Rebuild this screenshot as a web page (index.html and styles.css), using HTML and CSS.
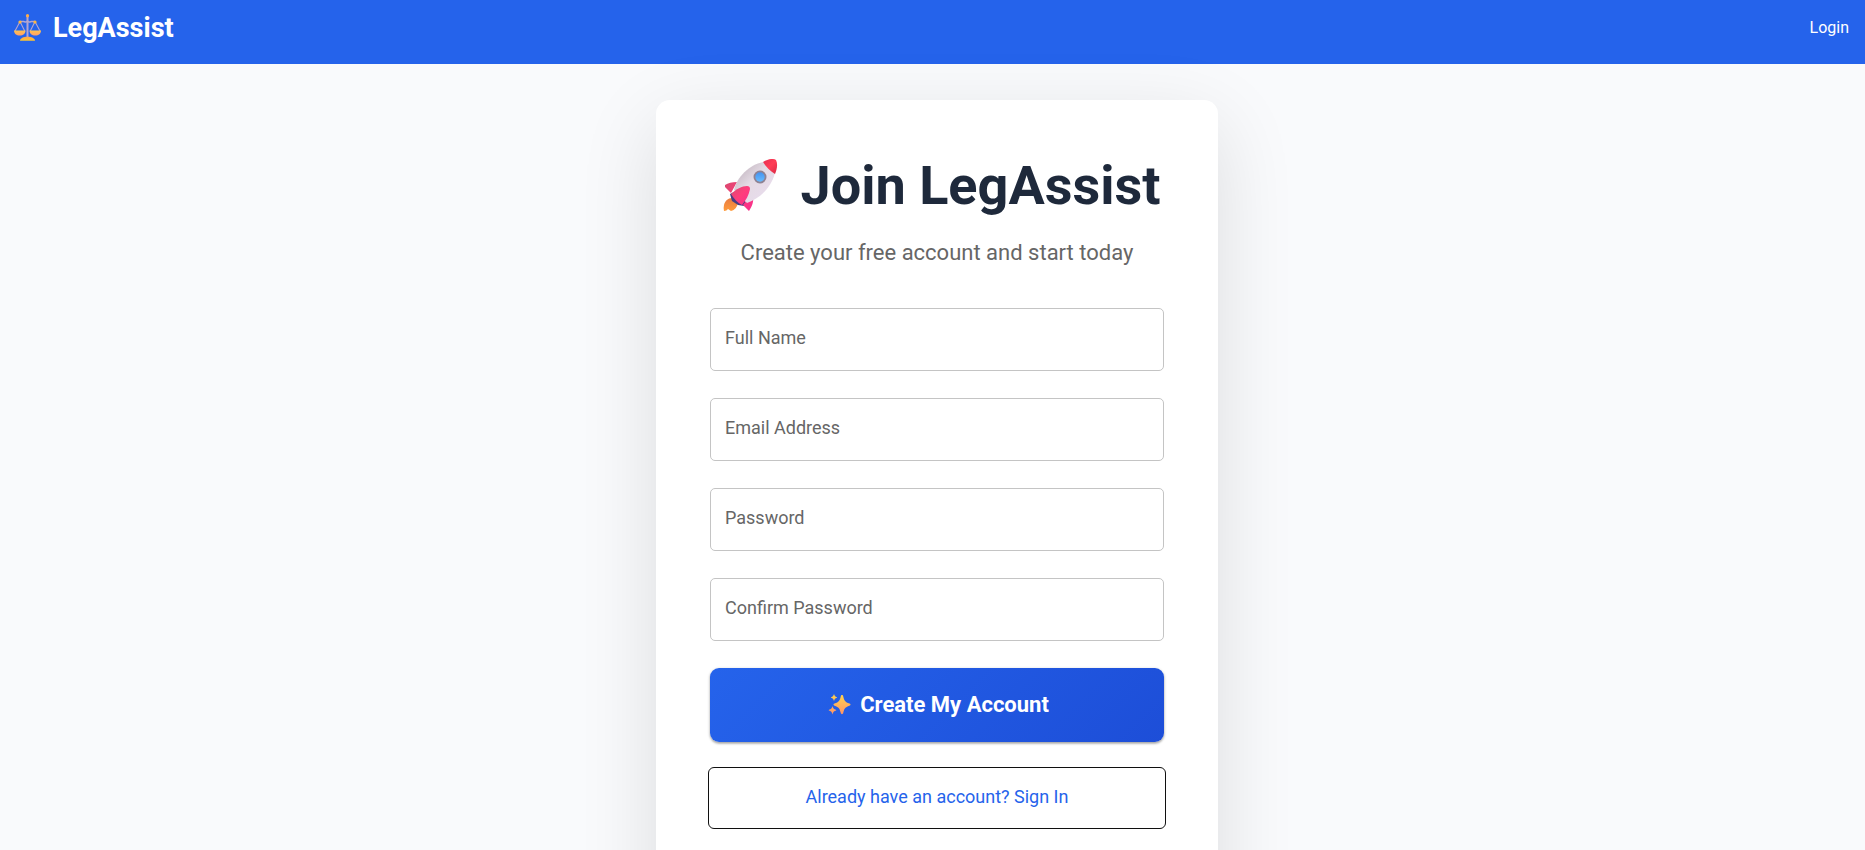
FILE: index.html
```html
<!DOCTYPE html>
<html lang="en">
<head>
<meta charset="utf-8">
<meta name="viewport" content="width=device-width, initial-scale=1">
<title>Join LegAssist</title>
<link rel="stylesheet" href="styles.css">
</head>
<body>
<header class="topbar">
  <a class="brand" href="#">
    <svg class="brand-icon" viewBox="0 0 37 28" aria-hidden="true">
      <defs>
        <linearGradient id="gold" x1="0" y1="0" x2="0" y2="1"><stop offset="0" stop-color="#ffc34d"/><stop offset="1" stop-color="#ff9f6b"/></linearGradient>
        <linearGradient id="base" x1="0" y1="0" x2="0" y2="1"><stop offset="0" stop-color="#ffa64f"/><stop offset="1" stop-color="#fbc62f"/></linearGradient>
      </defs>
      <g fill="none" stroke="#b5a5cf" stroke-linecap="round">
        <path stroke-width="2" d="M18.500 2v21"/>
        <path stroke-width="1.500" d="M18.500 7c-1.500 2-3 .5-4 .5h-3.500M18.500 7c1.500 2 3 .5 4 .5h3.500"/>
        <path stroke-width="1.100" d="M10.800 8 6 17M11.200 8l4.500 9M25.800 8 21.300 17M26.200 8 31 17"/>
      </g>
      <path fill="url(#gold)" d="M5 16.500h11.500c0 3-2.300 5-5.700 5S5 19.500 5 16.500zM20.500 16.500H32c0 3-2.300 5-5.700 5s-5.800-2-5.800-5z"/>
      <path fill="url(#base)" d="M11 26.800c0-2.500 3.500-4 7.500-4s7.500 1.500 7.500 4z"/>
      <circle cx="18.500" cy="1.700" r="1.600" fill="#ffad45"/><circle cx="11" cy="8" r="1.600" fill="#ffb73f"/><circle cx="26" cy="8" r="1.600" fill="#ffb73f"/>
    </svg>
    <span>LegAssist</span>
  </a>
  <nav><a class="login" href="#">Login</a></nav>
</header>
<main class="page">
  <section class="card">
    <h1 class="title">
      <svg class="title-icon" viewBox="0 0 74 54" aria-hidden="true">
        <defs>
          <linearGradient id="hull" x1="0" y1="0" x2="1" y2="1"><stop offset=".15" stop-color="#c5b8c3"/><stop offset=".45" stop-color="#e4dbe4"/><stop offset="1" stop-color="#eadcf0"/></linearGradient>
          <linearGradient id="nose" x1="0" y1="0" x2="1" y2="1"><stop offset="0" stop-color="#e52d50"/><stop offset=".5" stop-color="#ff3d55"/><stop offset="1" stop-color="#d92946"/></linearGradient>
          <linearGradient id="fin" x1="0" y1="0" x2="1" y2="1"><stop offset="0" stop-color="#d84a70"/><stop offset=".5" stop-color="#ff3d7c"/><stop offset="1" stop-color="#f72d8c"/></linearGradient>
          <linearGradient id="flame" x1="0" y1="0" x2="0" y2="1"><stop offset="0" stop-color="#e87b42"/><stop offset="1" stop-color="#ff9c3c"/></linearGradient>
          <linearGradient id="glass" x1="0" y1="0" x2="0" y2="1"><stop offset="0" stop-color="#4593ef"/><stop offset="1" stop-color="#68bcff"/></linearGradient>
        </defs>
        <path fill="url(#flame)" d="M18 39c-4 0-7 3-8 7-.5 2-.5 4 0 6 2 0 3-1 4-2l3 2c4-1 6-4 7-8z"/>
        <path fill="#493e83" d="m16 35 2 7 6 4 6 1 2-4-12-10z"/>
        <path fill="url(#fin)" d="M23 23c-5 0-9 1-12 3v2l6 6zM39 37c1 6-1 10-4 15l-6-6 6-8z"/>
        <path fill="url(#hull)" d="M49 3C35 6 23 18 20 31l13 13c13-5 24-15 28-30z"/>
        <path fill="url(#nose)" d="M49 3c5-3 10-4 13-2 2 4 1 9-1 14-5-3-9-7-12-12z"/>
        <path fill="url(#fin)" d="M17 35c5-5 11-8 16-8 2 0 3 1 3 3-1 6-4 11-8 16-4-2-8-6-11-11z"/>
        <circle cx="46" cy="18" r="6.500" fill="#8e8293"/><circle cx="46" cy="18" r="4.700" fill="url(#glass)"/>
      </svg>
      <span>Join LegAssist</span>
    </h1>
    <p class="subtitle">Create your free account and start today</p>
    <form class="form">
      <div class="field"><input id="name" type="text"><label for="name">Full Name</label></div>
      <div class="field"><input id="email" type="email"><label for="email">Email Address</label></div>
      <div class="field"><input id="password" type="password"><label for="password">Password</label></div>
      <div class="field"><input id="confirm" type="password"><label for="confirm">Confirm Password</label></div>
      <button class="submit" type="submit">
        <svg class="submit-icon" viewBox="0 0 30 22" aria-hidden="true">
          <defs><linearGradient id="spark" x1="0" y1="0" x2="0" y2="1"><stop offset="0" stop-color="#ffd34e"/><stop offset="1" stop-color="#ff9468"/></linearGradient></defs>
          <g fill="url(#spark)">
            <path d="M17 1c.7 0 1 .5 1.200 1.200 1.200 4.800 1.800 5.700 6.300 7.300.8.300 1 .6 1 1.100s-.2.800-1 1.100c-4.500 1.600-5.100 2.500-6.300 7.300-.2.700-.5 1.200-1.200 1.200s-1-.5-1.200-1.200c-1.200-4.800-1.800-5.700-6.300-7.300-.8-.3-1-.6-1-1.100s.2-.8 1-1.100c4.500-1.600 5.100-2.500 6.300-7.300C16 1.500 16.300 1 17 1z"/>
            <path d="M9 0c.7 2.100 1 2.500 3 3.200v.6C10 4.500 9.700 4.900 9 7c-.7-2.100-1-2.500-3-3.200v-.6C8 2.500 8.300 2.100 9 0zM7.500 12c.8 2.600 1.200 3 3.700 3.900v.6c-2.500.9-2.900 1.300-3.700 3.900-.8-2.600-1.200-3-3.700-3.900v-.6c2.500-.9 2.900-1.300 3.700-3.900z"/>
          </g>
        </svg>
        <span>Create My Account</span>
      </button>
      <button class="signin" type="button">Already have an account? Sign In</button>
    </form>
  </section>
</main>
</body>
</html>
```
FILE: styles.css
```css
* {
  box-sizing: border-box;
}

body {
  margin: 0;
  background: #f9fafc;
  font-family: Roboto, "Liberation Sans", sans-serif;
  font-size: 18px;
  line-height: 24px;
}

.topbar {
  display: flex;
  justify-content: space-between;
  align-items: flex-start;
  min-height: 64px;
  padding: 12px 16px 12px 9px;
  background: #2563eb;
}

.brand {
  display: flex;
  align-items: center;
  gap: 7px;
  color: #fff;
  font-size: 27px;
  font-weight: 700;
  line-height: 32px;
  text-decoration: none;
}

.brand-icon {
  width: 37px;
  height: 28px;
}

.login {
  display: block;
  padding: 4px 0;
  color: #fff;
  font-size: 16px;
  text-decoration: none;
}

.page {
  display: flex;
  justify-content: center;
  padding: 36px 0 36px 9px;
}

.card {
  width: 100%;
  max-width: 562px;
  padding: 54px 54px 144px;
  border-radius: 14px;
  background: #fff;
  box-shadow: 0 24px 80px rgba(0, 0, 0, 0.12);
}

.title {
  display: flex;
  justify-content: center;
  align-items: center;
  gap: 13px;
  margin: 0 0 19px;
  color: #1e293b;
  font-size: 54px;
  font-weight: 700;
  line-height: 64px;
  white-space: nowrap;
}

.title-icon {
  flex: none;
  width: 74px;
  height: 54px;
}

.subtitle {
  margin: 0 0 39px;
  color: #666;
  font-size: 22px;
  line-height: 32px;
  text-align: center;
}

.form {
  display: grid;
  gap: 27px;
}

.field {
  display: grid;
}

.field input,
.field label {
  grid-area: 1 / 1;
}

.field input {
  width: 100%;
  height: 63px;
  padding: 0 15px;
  border: 1px solid #c4c4c4;
  border-radius: 5px;
  background: transparent;
  font: inherit;
}

.field label {
  justify-self: start;
  align-self: start;
  padding: 18px 15px;
  color: #666;
  pointer-events: none;
}

.submit {
  display: flex;
  justify-content: center;
  align-items: center;
  gap: 5px;
  min-height: 74px;
  border: 0;
  border-radius: 9px;
  background: linear-gradient(135deg, #2563eb, #1d4ed8);
  box-shadow: 0 1px 3px rgba(0, 0, 0, 0.3), 0 2px 2px rgba(0, 0, 0, 0.14);
  color: #fff;
  font: 700 22px/28px Roboto, "Liberation Sans", sans-serif;
}

.submit-icon {
  width: 30px;
  height: 22px;
}

.signin {
  min-height: 58px;
  padding: 0 0 3px;
  border: 0;
  border-radius: 4px;
  outline: 1px solid #101010;
  outline-offset: 1px;
  background: transparent;
  color: #2563eb;
  font: inherit;
}
```
